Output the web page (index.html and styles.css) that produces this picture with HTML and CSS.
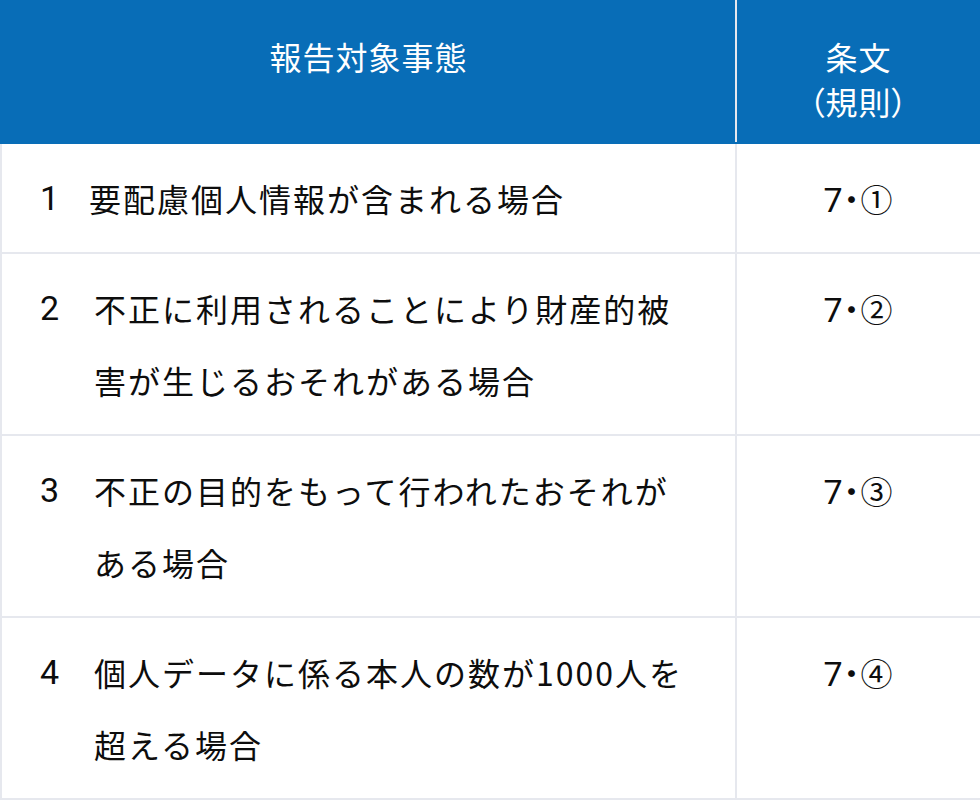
FILE: index.html
```html
<!DOCTYPE html>
<html lang="ja">
<head>
<meta charset="utf-8">
<title>報告対象事態</title>
<link rel="stylesheet" href="styles.css">
</head>
<body>
<table class="report-table">
  <colgroup>
    <col class="col-event">
    <col class="col-article">
  </colgroup>
  <thead>
    <tr>
      <th class="head-event">報告対象事態</th>
      <th class="head-article">条文<br>（規則）</th>
    </tr>
  </thead>
  <tbody>
    <tr>
      <td class="event"><div class="item"><span class="num num-one">1</span><span class="desc">要配慮個人情報が含まれる場合</span></div></td>
      <td class="article"><span class="art-no">7</span>・①</td>
    </tr>
    <tr>
      <td class="event"><div class="item"><span class="num">2</span><span class="desc">不正に利用されることにより財産的被害が生じるおそれがある場合</span></div></td>
      <td class="article"><span class="art-no">7</span>・②</td>
    </tr>
    <tr>
      <td class="event"><div class="item"><span class="num">3</span><span class="desc">不正の目的をもって行われたおそれがある場合</span></div></td>
      <td class="article"><span class="art-no">7</span>・③</td>
    </tr>
    <tr>
      <td class="event"><div class="item"><span class="num">4</span><span class="desc">個人データに係る本人の数が1000人を超える場合</span></div></td>
      <td class="article"><span class="art-no">7</span>・④</td>
    </tr>
  </tbody>
</table>
</body>
</html>
```

FILE: styles.css
```css
html, body {
  margin: 0;
  padding: 0;
  background: #ffffff;
}

body {
  font-family: "Noto Sans CJK JP", "Noto Sans", sans-serif;
  color: #0d0d0d;
}

.report-table {
  width: 980px;
  border-collapse: collapse;
  table-layout: fixed;
}

.col-event {
  width: 735px;
}

.col-article {
  width: 245px;
}

.report-table th {
  background: #086db7;
  color: #ffffff;
  font-weight: 400;
  font-size: 32px;
  line-height: 45px;
  letter-spacing: 1px;
  vertical-align: top;
  text-align: center;
  padding: 32px 0 18px;
  border: 2px solid #086db7;
}

.report-table th.head-event {
  border-right: 2px solid #e6e8ee;
}

.report-table th.head-article {
  font-feature-settings: "palt";
}

.report-table td {
  border: 2px solid #e6e8ee;
  vertical-align: top;
  font-size: 32px;
  line-height: 72px;
  padding: 18px 0 18px;
}

.event {
  padding-left: 38px !important;
  padding-right: 40px !important;
}

.item {
  display: flex;
  align-items: flex-start;
}

.num {
  flex: 0 0 54px;
  font-family: Roboto, "Noto Sans CJK JP", sans-serif;
  font-size: 34px;
}

.num-one {
  flex-basis: 49px;
}

.desc {
  letter-spacing: 2px;
}

.article {
  text-align: center;
  font-feature-settings: "palt";
  letter-spacing: 1px;
}

.art-no {
  font-family: Roboto, "Noto Sans CJK JP", sans-serif;
  font-size: 34px;
  line-height: 1;
}
```
